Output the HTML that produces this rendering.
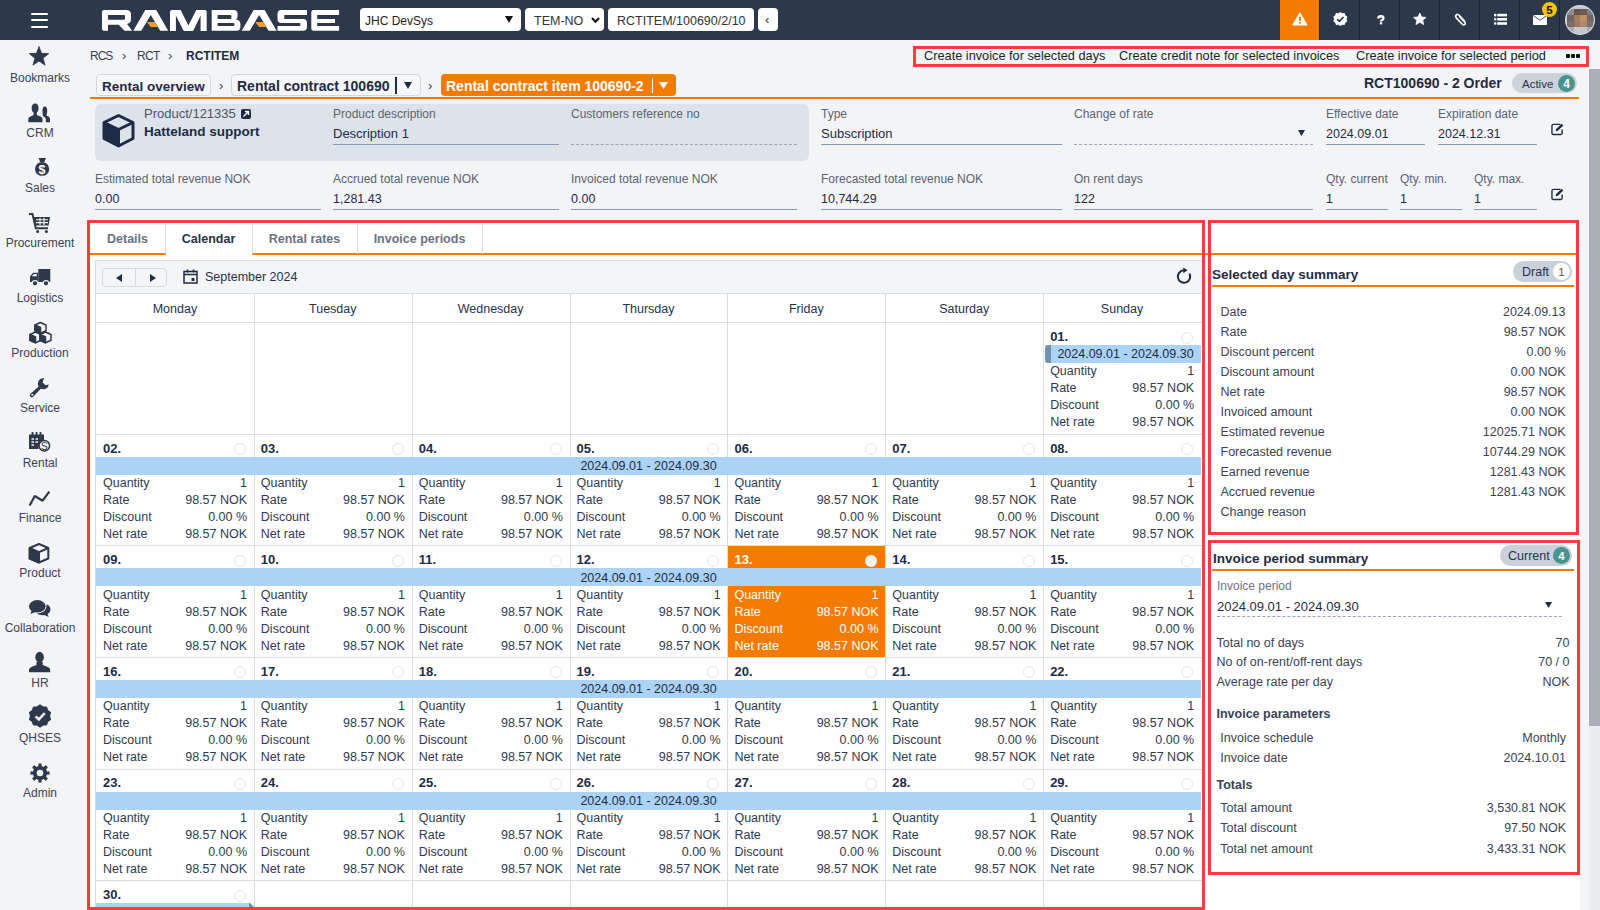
<!DOCTYPE html><html><head><meta charset="utf-8"><style>
*{box-sizing:border-box;margin:0;padding:0}
html,body{width:1600px;height:910px;overflow:hidden;background:#f3f4f6;font-family:"Liberation Sans",sans-serif;color:#27324a}
.b{position:absolute}
.t{position:absolute;white-space:pre;line-height:1}
svg{position:absolute;display:block;overflow:visible}
</style></head><body>

<div class="b" style="left:0px;top:0px;width:1600px;height:40px;background:#2e384b"></div>
<div class="b" style="left:31px;top:13px;width:17px;height:2px;background:#fff;border-radius:1px"></div>
<div class="b" style="left:31px;top:19px;width:17px;height:2px;background:#fff;border-radius:1px"></div>
<div class="b" style="left:31px;top:26px;width:17px;height:2px;background:#fff;border-radius:1px"></div>
<svg style="left:0;top:0" width="400" height="40" viewBox="0 0 400 40"><path fill-rule="evenodd" fill="#fff" d="M102,12 Q102,10 104,10 H126 Q131,10 131,14.5 V19.5 Q131,23 127,24 L132.2,30.7 H124.6 L118.7,24.8 H108 V30.7 H104 Q102,30.7 102,28.7 Z M108,15.1 V19.85 H124 Q125,19.85 125,18.85 V16.1 Q125,15.1 124,15.1 Z"/><path fill="#fff" d="M133.3,30.7 L145.3,10 H156.2 L168.2,30.7 H160.2 L150.75,15 L141.3,30.7 Z"/><path fill="#f59a2c" d="M146.8,22 H154.6 L158.5,27 H150.7 Z"/><path fill="#fff" d="M170,31 V12 Q170,10 172,10 H180.6 L188.4,25.4 L196.25,10 H204.7 Q206.7,10 206.7,12 V31 H200.6 V15.4 L193.1,31 H183.75 L175.9,15.4 V31 Z"/><path fill-rule="evenodd" fill="#fff" d="M211.7,10 H233.5 Q237.5,10 237.5,13.5 V16.5 Q237.5,18.6 236,19.6 Q240.4,20.5 240.4,24 V27 Q240.4,30.7 236.5,30.7 H211.7 Z M217.6,15.1 V18.9 H230.5 Q231.5,18.9 231.5,17 Q231.5,15.1 230.5,15.1 Z M217.6,23.1 V26.1 H233.5 Q234.5,26.1 234.5,24.6 Q234.5,23.1 233.5,23.1 Z"/><path fill="#fff" d="M241.7,30.7 L253.7,10 H264.6 L276.6,30.7 H268.6 L259.15,15 L249.7,30.7 Z"/><path fill="#f59a2c" d="M255.2,22 H263 L266.9,27 H259.1 Z"/><path fill="#fff" d="M281,10 H307 V15.1 H284.3 V18.9 H303 Q307,18.9 307,22.9 V26.7 Q307,30.7 303,30.7 H277.5 V26.1 H300.3 V23.1 H281.5 Q277.5,23.1 277.5,19.1 V14 Q277.5,10 281,10 Z"/><path fill="#fff" d="M313.5,10 H339.1 V15.1 H317.2 V18.9 H335 V23.1 H317.2 V26.1 H339.1 V30.7 H313.5 Q311.3,30.7 311.3,28.5 V12.2 Q311.3,10 313.5,10 Z"/></svg>
<div class="b" style="left:360px;top:8px;width:161px;height:23px;background:#fff;border-radius:4px"></div>
<div class="t" style="left:365px;top:15px;font-size:12px;font-weight:normal;color:#222;">JHC DevSys</div>
<svg style="left:505px;top:16px;" width="8" height="7" viewBox="0 0 8 7"><path d="M0 0H8L4 7Z" fill="#111"/></svg>
<div class="b" style="left:525px;top:8px;width:79px;height:23px;background:#fff;border-radius:4px"></div>
<div class="t" style="left:534px;top:15px;font-size:12.5px;font-weight:normal;color:#333;">TEM-NO</div>
<svg style="left:591px;top:17px;" width="9" height="7" viewBox="0 0 9 7"><path d="M1 1L4.5 4.8L8 1" stroke="#111" stroke-width="2" fill="none"/></svg>
<div class="b" style="left:608px;top:8px;width:146px;height:23px;background:#fff;border-radius:4px"></div>
<div class="t" style="left:617px;top:15px;font-size:12.5px;font-weight:normal;color:#333;">RCTITEM/100690/2/10</div>
<div class="b" style="left:758px;top:8px;width:20px;height:23px;background:#fff;border-radius:4px"></div>
<div class="t" style="left:765px;top:13px;font-size:13px;font-weight:normal;color:#333;">‹</div>
<div class="b" style="left:1280px;top:0px;width:39px;height:40px;background:#f37b00"></div>
<div class="b" style="left:1319px;top:0px;width:1px;height:40px;background:#1e2636"></div>
<div class="b" style="left:1359px;top:0px;width:1px;height:40px;background:#1e2636"></div>
<div class="b" style="left:1399px;top:0px;width:1px;height:40px;background:#1e2636"></div>
<div class="b" style="left:1439px;top:0px;width:1px;height:40px;background:#1e2636"></div>
<div class="b" style="left:1479px;top:0px;width:1px;height:40px;background:#1e2636"></div>
<div class="b" style="left:1519px;top:0px;width:1px;height:40px;background:#1e2636"></div>
<div class="b" style="left:1559px;top:0px;width:1px;height:40px;background:#1e2636"></div>
<svg style="left:0;top:0" width="1600" height="40" viewBox="0 0 1600 40"><path d="M1299.9,13 L1306.8,24.8 H1293 Z" fill="#fff" stroke="#fff" stroke-width="1.2" stroke-linejoin="round"/><rect x="1299" y="16.8" width="1.9" height="4" fill="#f37b00"/><rect x="1299" y="21.8" width="1.9" height="1.8" fill="#f37b00"/><path d="M1340.3,12 L1342.3,13.3 L1344.6,13.1 L1345.4,15.3 L1347.3,16.7 L1346.6,19 L1347.3,21.3 L1345.4,22.7 L1344.6,24.9 L1342.3,24.7 L1340.3,26 L1338.3,24.7 L1336,24.9 L1335.2,22.7 L1333.3,21.3 L1334,19 L1333.3,16.7 L1335.2,15.3 L1336,13.1 L1338.3,13.3 Z" fill="#fff"/><path d="M1337.2,19.2 L1339.4,21.3 L1343.5,17" stroke="#2e384b" stroke-width="1.7" fill="none"/><path d="M1419.8,13 L1421.6,17 L1426,17.4 L1422.7,20.3 L1423.7,24.6 L1419.8,22.3 L1415.9,24.6 L1416.9,20.3 L1413.6,17.4 L1418,17 Z" fill="#fff" stroke="#fff" stroke-width="0.8" stroke-linejoin="round"/><path d="M1464.3,20.8 L1459.5,15.6 Q1457.6,13.6 1456.2,15 Q1454.8,16.4 1456.7,18.4 L1462.3,24.2 Q1463.6,25.5 1464.8,24.4 Q1466,23.3 1464.6,21.9 L1459.8,16.9" stroke="#fff" stroke-width="1.6" fill="none" stroke-linecap="round"/><rect x="1494" y="13.8" width="2.4" height="2.6" rx="1" fill="#fff"/><rect x="1497.2" y="13.8" width="9.8" height="2.6" fill="#fff"/><rect x="1494" y="18" width="2.4" height="2.6" rx="1" fill="#fff"/><rect x="1497.2" y="18" width="9.8" height="2.6" fill="#fff"/><rect x="1494" y="22.2" width="2.4" height="2.6" rx="1" fill="#fff"/><rect x="1497.2" y="22.2" width="9.8" height="2.6" fill="#fff"/><rect x="1533" y="15" width="14" height="10" rx="0.8" fill="#fff"/><path d="M1533.3,15.5 L1540,20.3 L1546.7,15.5" stroke="#2e384b" stroke-width="0.9" fill="none"/><circle cx="1549.5" cy="9.5" r="7.5" fill="#f6c311"/></svg>
<div class="t" style="left:1249.5px;width:600px;top:5px;font-size:11.5px;font-weight:bold;color:#111;text-align:center;">5</div>
<svg style="left:0;top:0" width="1600" height="40" viewBox="0 0 1600 40"><path d="M1378.4,18.4 Q1378.4,16.3 1380.9,16.3 Q1383.4,16.3 1383.4,18.2 Q1383.4,19.4 1382.1,20 Q1381,20.5 1381,21.4" stroke="#fff" stroke-width="2.4" fill="none"/><rect x="1379.8" y="22.2" width="2.4" height="2.2" fill="#fff"/></svg>
<div class="b" style="left:1565px;top:5px;width:30px;height:30px;border-radius:50%;overflow:hidden;background:#c7c9ce"><div style="position:absolute;left:2px;top:3.8px;width:26.6px;height:24.4px;display:grid;grid-template-columns:repeat(4,1fr);grid-template-rows:repeat(4,1fr)"><div style="background:#8e8e92"></div><div style="background:#6a5349"></div><div style="background:#6d5a52"></div><div style="background:#7e7d80"></div><div style="background:#6e6763"></div><div style="background:#a67b5e"></div><div style="background:#c38e66"></div><div style="background:#6f6865"></div><div style="background:#7a6f69"></div><div style="background:#9a7863"></div><div style="background:#b0876a"></div><div style="background:#7b736e"></div><div style="background:#a9abb1"></div><div style="background:#c7c9cf"></div><div style="background:#c5c7cc"></div><div style="background:#a9aaae"></div></div><div style="position:absolute;inset:0;border-radius:50%;border:1.6px solid #d5d8de"></div></div>
<div class="t" style="left:-260px;width:600px;top:72px;font-size:12px;font-weight:normal;color:#3a4354;text-align:center;">Bookmarks</div>
<svg style="left:29.3px;top:46px" width="22" height="22" viewBox="0 0 22 22"><path d="M10.00,0.50 L12.53,7.32 L19.80,7.62 L14.09,12.13 L16.05,19.13 L10.00,15.10 L3.95,19.13 L5.91,12.13 L0.20,7.62 L7.47,7.32 Z" fill="#2e384b" stroke="#2e384b" stroke-width="0.8" stroke-linejoin="round"/></svg>
<div class="t" style="left:-260px;width:600px;top:127px;font-size:12px;font-weight:normal;color:#3a4354;text-align:center;">CRM</div>
<svg style="left:28.8px;top:103px" width="22" height="22" viewBox="0 0 22 22"><ellipse cx="6.1" cy="5.2" rx="3.4" ry="4.6" fill="#2e384b"/><path d="M-0.7,19.2 V16 Q-0.7,14 2.5,13 L4.6,12 V9 H7.8 V12 L10,13 Q13.5,14 13.5,16 V19.2 Z" fill="#2e384b"/><ellipse cx="15.8" cy="8" rx="2.4" ry="4.4" fill="#2e384b"/><path d="M16.8,19.2 V16.3 Q16.8,14.6 14.6,13.5 L13.8,13 V11 H17.6 V12.8 Q21,13.8 21,16 V19.2 Z" fill="#2e384b"/></svg>
<div class="t" style="left:-260px;width:600px;top:182px;font-size:12px;font-weight:normal;color:#3a4354;text-align:center;">Sales</div>
<svg style="left:32.4px;top:158px" width="22" height="22" viewBox="0 0 22 22"><path d="M6.5,0 H14 L12.3,4 H8.2 Z" fill="#2e384b"/><circle cx="10.1" cy="11" r="7.1" fill="#2e384b"/><text x="10.1" y="15.6" text-anchor="middle" font-family="Liberation Sans" font-weight="bold" font-size="12.5" fill="#fff">$</text></svg>
<div class="t" style="left:-260px;width:600px;top:237px;font-size:12px;font-weight:normal;color:#3a4354;text-align:center;">Procurement</div>
<svg style="left:29px;top:212.9px" width="22" height="22" viewBox="0 0 22 22"><path d="M0,1 H3.5 L6.8,15.3 H19" stroke="#2e384b" stroke-width="2" fill="none"/><path d="M4.6,4 H21 L19.6,12.6 H6.6 Z" fill="#2e384b"/><path d="M7,6.8 H19 M7,9.6 H19 M11,4.8 V12 M15,4.8 V12" stroke="#f3f4f6" stroke-width="1.1"/><circle cx="8.6" cy="18.5" r="1.5" fill="#2e384b"/><circle cx="17.4" cy="18.5" r="1.5" fill="#2e384b"/></svg>
<div class="t" style="left:-260px;width:600px;top:292px;font-size:12px;font-weight:normal;color:#3a4354;text-align:center;">Logistics</div>
<svg style="left:29.5px;top:269.4px" width="22" height="22" viewBox="0 0 22 22"><rect x="8.3" y="0" width="12" height="13" fill="#2e384b"/><path d="M0,13 V7.5 L3,3.7 H8.3 V13 Z" fill="#2e384b"/><path d="M1.8,7.3 L3.8,5 H6.8 V7.3 Z" fill="#f3f4f6"/><circle cx="5" cy="14.3" r="2.7" fill="#2e384b" stroke="#f3f4f6" stroke-width="1.1"/><circle cx="16" cy="14.3" r="2.7" fill="#2e384b" stroke="#f3f4f6" stroke-width="1.1"/></svg>
<div class="t" style="left:-260px;width:600px;top:347px;font-size:12px;font-weight:normal;color:#3a4354;text-align:center;">Production</div>
<svg style="left:29.5px;top:321.5px" width="22" height="22" viewBox="0 0 22 22"><g stroke="#2e384b" stroke-width="1.5" stroke-linejoin="round"><path d="M10.5,0.5 L16,3 V8.8 L10.5,11.3 L5,8.8 V3 Z" fill="#f3f4f6"/><path d="M5,3 L10.5,5.5 V11.3 L5,8.8 Z" fill="#2e384b"/><path d="M5.5,10 L11,12.5 V18.3 L5.5,20.8 L0,18.3 V12.5 Z" fill="#f3f4f6"/><path d="M0,12.5 L5.5,15 V20.8 L0,18.3 Z" fill="#2e384b"/><path d="M15.5,10 L21,12.5 V18.3 L15.5,20.8 L10,18.3 V12.5 Z" fill="#f3f4f6"/><path d="M10,12.5 L15.5,15 V20.8 L10,18.3 Z" fill="#2e384b"/></g></svg>
<div class="t" style="left:-260px;width:600px;top:402px;font-size:12px;font-weight:normal;color:#3a4354;text-align:center;">Service</div>
<svg style="left:29.4px;top:378px" width="22" height="22" viewBox="0 0 22 22"><path d="M15.2,0.3 A5.5,5.5 0 1 0 19.8,6.5 L16.6,7.2 L13.6,4.6 L14.5,1.5 Z" fill="#2e384b"/><path d="M12.5,6 L1.5,15.8 Q0,17.3 1.4,18.8 Q2.9,20.2 4.4,18.6 L14.4,8 Z" fill="#2e384b"/><circle cx="3.3" cy="16.8" r="1" fill="#f3f4f6"/></svg>
<div class="t" style="left:-260px;width:600px;top:457px;font-size:12px;font-weight:normal;color:#3a4354;text-align:center;">Rental</div>
<svg style="left:29.4px;top:432.4px" width="22" height="22" viewBox="0 0 22 22"><path d="M0,2.5 H15 V10 A6,6 0 0 0 9.5,16 V17 H0 Z" fill="#2e384b"/><path d="M3.5,0 V4 M7.5,0 V4 M11.5,0 V4" stroke="#2e384b" stroke-width="1.8"/><path d="M2.5,7 H5 M6.5,7 H9 M2.5,10 H5 M6.5,10 H9 M2.5,13 H5" stroke="#f3f4f6" stroke-width="1.6"/><circle cx="15.3" cy="13.7" r="5.3" fill="#f3f4f6" stroke="#2e384b" stroke-width="1.5"/><text x="15.3" y="17.6" text-anchor="middle" font-family="Liberation Sans" font-size="10" fill="#2e384b">S</text></svg>
<div class="t" style="left:-260px;width:600px;top:512px;font-size:12px;font-weight:normal;color:#3a4354;text-align:center;">Finance</div>
<svg style="left:29px;top:490.6px" width="22" height="22" viewBox="0 0 22 22"><path d="M0.6,14.5 L5.8,5 L13.6,9.7 L20.3,0.6" stroke="#2e384b" stroke-width="2.2" fill="none" stroke-linejoin="bevel"/></svg>
<div class="t" style="left:-260px;width:600px;top:567px;font-size:12px;font-weight:normal;color:#3a4354;text-align:center;">Product</div>
<svg style="left:28.9px;top:542.5px" width="22" height="22" viewBox="0 0 22 22"><g stroke="#2e384b" stroke-width="2" stroke-linejoin="round"><path d="M10,1 L19.3,5 V15.5 L10,19.5 L0.7,15.5 V5 Z" fill="#f3f4f6"/><path d="M0.7,5 L10,9.2 V19.5 L0.7,15.5 Z" fill="#2e384b"/><path d="M10,9.2 L19.3,5"/></g></svg>
<div class="t" style="left:-260px;width:600px;top:622px;font-size:12px;font-weight:normal;color:#3a4354;text-align:center;">Collaboration</div>
<svg style="left:28.7px;top:600px" width="22" height="22" viewBox="0 0 22 22"><ellipse cx="8.3" cy="6.3" rx="8.3" ry="6.2" fill="#2e384b"/><path d="M2.5,10.5 L1.5,14 L6.5,12 Z" fill="#2e384b"/><path d="M17.6,4.2 Q21.5,6.2 21.5,9.5 Q21.5,12.5 18.5,14.2 L19.8,17 L15,15 Q13.5,15.3 11.8,15 Q9.5,14.6 8,13.5 Q15,13 17,8.5 Q17.8,6.3 17.6,4.2 Z" fill="#2e384b"/></svg>
<div class="t" style="left:-260px;width:600px;top:677px;font-size:12px;font-weight:normal;color:#3a4354;text-align:center;">HR</div>
<svg style="left:28.9px;top:652px" width="22" height="22" viewBox="0 0 22 22"><ellipse cx="10.6" cy="5.2" rx="4.3" ry="5.4" fill="#2e384b"/><path d="M0,20.3 V18.2 Q0,15.8 3.5,14.6 L7.5,13 V10 H13.7 V13 L17.7,14.6 Q21.2,15.8 21.2,18.2 V20.3 Z" fill="#2e384b"/></svg>
<div class="t" style="left:-260px;width:600px;top:732px;font-size:12px;font-weight:normal;color:#3a4354;text-align:center;">QHSES</div>
<svg style="left:29.5px;top:706.3px" width="22" height="22" viewBox="0 0 22 22"><path d="M10.00,-0.80 L12.87,1.16 L16.35,1.26 L17.52,4.53 L20.27,6.66 L19.30,10.00 L20.27,13.34 L17.52,15.47 L16.35,18.74 L12.87,18.84 L10.00,20.80 L7.13,18.84 L3.65,18.74 L2.48,15.47 L-0.27,13.34 L0.70,10.00 L-0.27,6.66 L2.48,4.53 L3.65,1.26 L7.13,1.16 Z" fill="#2e384b" stroke="#2e384b" stroke-width="1.5" stroke-linejoin="round"/><path d="M5.6,10.4 L8.8,13.4 L14.8,7.2" stroke="#f3f4f6" stroke-width="2.6" fill="none"/></svg>
<div class="t" style="left:-260px;width:600px;top:787px;font-size:12px;font-weight:normal;color:#3a4354;text-align:center;">Admin</div>
<svg style="left:29.9px;top:762.6px" width="22" height="22" viewBox="0 0 22 22"><path fill-rule="evenodd" d="M17.03,8.43 L19.56,8.36 L19.56,11.64 L17.03,11.57 L16.08,13.86 L17.92,15.60 L15.60,17.92 L13.86,16.08 L11.57,17.03 L11.64,19.56 L8.36,19.56 L8.43,17.03 L6.14,16.08 L4.40,17.92 L2.08,15.60 L3.92,13.86 L2.97,11.57 L0.44,11.64 L0.44,8.36 L2.97,8.43 L3.92,6.14 L2.08,4.40 L4.40,2.08 L6.14,3.92 L8.43,2.97 L8.36,0.44 L11.64,0.44 L11.57,2.97 L13.86,3.92 L15.60,2.08 L17.92,4.40 L16.08,6.14 Z M13.3,10 A3.3,3.3 0 1 0 6.7,10 A3.3,3.3 0 1 0 13.3,10 Z" fill="#2e384b"/></svg>
<div class="t" style="left:90px;top:50px;font-size:12px;font-weight:normal;color:#374151;letter-spacing:-1px">RCS</div>
<div class="t" style="left:122px;top:49px;font-size:13px;font-weight:normal;color:#374151;">›</div>
<div class="t" style="left:137px;top:50px;font-size:12px;font-weight:normal;color:#374151;letter-spacing:-0.7px">RCT</div>
<div class="t" style="left:168px;top:49px;font-size:13px;font-weight:normal;color:#374151;">›</div>
<div class="t" style="left:186px;top:50px;font-size:12px;font-weight:bold;color:#1f2b45;">RCTITEM</div>
<div class="b" style="left:913px;top:46px;width:676px;height:21px;border:3px solid #fc3b40"></div>
<div class="t" style="left:924px;top:50px;font-size:12.75px;font-weight:normal;color:#222;">Create invoice for selected days</div>
<div class="t" style="left:1119px;top:50px;font-size:12.75px;font-weight:normal;color:#222;">Create credit note for selected invoices</div>
<div class="t" style="left:1356px;top:50px;font-size:12.75px;font-weight:normal;color:#222;">Create invoice for selected period</div>
<div class="b" style="left:1566px;top:54px;width:4px;height:4px;background:#111;border-radius:1px"></div>
<div class="b" style="left:1571px;top:54px;width:4px;height:4px;background:#111;border-radius:1px"></div>
<div class="b" style="left:1576px;top:54px;width:4px;height:4px;background:#111;border-radius:1px"></div>
<div class="b" style="left:96px;top:74px;width:115px;height:22px;border:1px solid #d3d7dd;border-radius:4px;background:#f5f6f8"></div>
<div class="t" style="left:102px;top:80px;font-size:13.5px;font-weight:bold;color:#1f2b45;">Rental overview</div>
<div class="t" style="left:219px;top:79px;font-size:13px;font-weight:normal;color:#374151;">›</div>
<div class="b" style="left:231px;top:74px;width:190px;height:22px;border:1px solid #d3d7dd;border-radius:4px;background:#f5f6f8"></div>
<div class="t" style="left:237px;top:79px;font-size:14px;font-weight:bold;color:#1f2b45;">Rental contract 100690</div>
<div class="b" style="left:395px;top:77px;width:2px;height:17px;background:#1f2b45"></div>
<svg style="left:404px;top:82px;" width="8" height="7" viewBox="0 0 8 7"><path d="M0 0H8L4 7Z" fill="#1f2b45"/></svg>
<div class="t" style="left:428px;top:79px;font-size:13px;font-weight:normal;color:#374151;">›</div>
<div class="b" style="left:441px;top:74px;width:235px;height:22px;background:#f37b00;border-radius:4px"></div>
<div class="t" style="left:446px;top:79px;font-size:14px;font-weight:bold;color:#fff;">Rental contract item 100690-2</div>
<div class="b" style="left:652px;top:78px;width:1px;height:15px;background:#fff"></div>
<svg style="left:659px;top:82px;" width="9" height="7" viewBox="0 0 9 7"><path d="M0 0H9L4.5 7Z" fill="#fff"/></svg>
<div class="t" style="left:1364px;top:76px;font-size:14px;font-weight:bold;color:#1f2b45;">RCT100690 - 2 Order</div>
<div class="b" style="left:1512px;top:73px;width:65px;height:20px;background:#cdd3db;border-radius:10px"></div>
<div class="t" style="left:1522px;top:79px;font-size:11.5px;font-weight:normal;color:#27324a;">Active</div>
<div class="b" style="left:1558px;top:75px;width:17px;height:17px;background:#4a9490;border-radius:50%"></div>
<div class="t" style="left:1266.5px;width:600px;top:78px;font-size:12px;font-weight:bold;color:#fff;text-align:center;">4</div>
<div class="b" style="left:90px;top:97px;width:1489px;height:2px;background:#f37b00"></div>
<div class="b" style="left:1589px;top:726px;width:11px;height:184px;background:#ebecef"></div>
<div class="b" style="left:1589px;top:69px;width:11px;height:657px;background:#a9aeb8"></div>
<div class="b" style="left:95px;top:104px;width:714px;height:57px;background:#dde3eb;border-radius:6px"></div>
<svg style="left:102px;top:114px;" width="33" height="34" viewBox="0 0 33 34"><path d="M16.5 1.5L31 8.5V24.5L16.5 32L2 24.5V8.5Z" fill="none" stroke="#1f2b45" stroke-width="3" stroke-linejoin="round"/><path d="M2 8.5L16.5 15.5L31 8.5" fill="none" stroke="#1f2b45" stroke-width="3" stroke-linejoin="round"/><path d="M16.5 15.5V32" stroke="#1f2b45" stroke-width="3"/><path d="M2 8.5L16.5 15.5V32L2 24.5Z" fill="#1f2b45"/></svg>
<div class="t" style="left:144px;top:107px;font-size:13px;font-weight:normal;color:#4b5563;">Product/121335</div>
<div class="b" style="left:241px;top:109px;width:10px;height:10px;background:#1f2b45;border-radius:2px"></div>
<svg style="left:243px;top:111px;" width="6" height="6" viewBox="0 0 6 6"><path d="M0.5 5.5L5.5 0.5M2 0.5H5.5V4" stroke="#fff" stroke-width="1.4" fill="none"/></svg>
<div class="t" style="left:144px;top:125px;font-size:13.5px;font-weight:bold;color:#1f2b45;">Hatteland support</div>
<div class="t" style="left:333px;top:108px;font-size:12px;font-weight:normal;color:#5b6372;">Product description</div>
<div class="t" style="left:333px;top:127px;font-size:13px;font-weight:normal;color:#1f2b45;">Description 1</div>
<div class="b" style="left:333px;top:144px;width:226px;height:1px;background:#8a9ab0"></div>
<div class="t" style="left:571px;top:108px;font-size:12px;font-weight:normal;color:#5b6372;">Customers reference no</div>
<div class="b" style="left:571px;top:144px;width:226px;height:1px;border-top:1px dashed #9aa7b8"></div>
<div class="t" style="left:821px;top:108px;font-size:12px;font-weight:normal;color:#5b6372;">Type</div>
<div class="t" style="left:821px;top:127px;font-size:13px;font-weight:normal;color:#1f2b45;">Subscription</div>
<div class="b" style="left:821px;top:144px;width:241px;height:1px;background:#8a9ab0"></div>
<div class="t" style="left:1074px;top:108px;font-size:12px;font-weight:normal;color:#5b6372;">Change of rate</div>
<div class="b" style="left:1074px;top:144px;width:239px;height:1px;border-top:1px dashed #9aa7b8"></div>
<svg style="left:1298px;top:130px;" width="7" height="6" viewBox="0 0 7 6"><path d="M0 0H7L3.5 6Z" fill="#1f2b45"/></svg>
<div class="t" style="left:1326px;top:108px;font-size:12px;font-weight:normal;color:#5b6372;">Effective date</div>
<div class="t" style="left:1326px;top:128px;font-size:12.5px;font-weight:normal;color:#1f2b45;">2024.09.01</div>
<div class="b" style="left:1326px;top:144px;width:99px;height:1px;background:#8a9ab0"></div>
<div class="t" style="left:1438px;top:108px;font-size:12px;font-weight:normal;color:#5b6372;">Expiration date</div>
<div class="t" style="left:1438px;top:128px;font-size:12.5px;font-weight:normal;color:#1f2b45;">2024.12.31</div>
<div class="b" style="left:1438px;top:144px;width:99px;height:1px;background:#8a9ab0"></div>
<div class="t" style="left:95px;top:173px;font-size:12px;font-weight:normal;color:#5b6372;">Estimated total revenue NOK</div>
<div class="t" style="left:95px;top:193px;font-size:12.5px;font-weight:normal;color:#1f2b45;">0.00</div>
<div class="b" style="left:95px;top:209px;width:226px;height:1px;background:#8a9ab0"></div>
<div class="t" style="left:333px;top:173px;font-size:12px;font-weight:normal;color:#5b6372;">Accrued total revenue NOK</div>
<div class="t" style="left:333px;top:193px;font-size:12.5px;font-weight:normal;color:#1f2b45;">1,281.43</div>
<div class="b" style="left:333px;top:209px;width:226px;height:1px;background:#8a9ab0"></div>
<div class="t" style="left:571px;top:173px;font-size:12px;font-weight:normal;color:#5b6372;">Invoiced total revenue NOK</div>
<div class="t" style="left:571px;top:193px;font-size:12.5px;font-weight:normal;color:#1f2b45;">0.00</div>
<div class="b" style="left:571px;top:209px;width:226px;height:1px;background:#8a9ab0"></div>
<div class="t" style="left:821px;top:173px;font-size:12px;font-weight:normal;color:#5b6372;">Forecasted total revenue NOK</div>
<div class="t" style="left:821px;top:193px;font-size:12.5px;font-weight:normal;color:#1f2b45;">10,744.29</div>
<div class="b" style="left:821px;top:209px;width:241px;height:1px;background:#8a9ab0"></div>
<div class="t" style="left:1074px;top:173px;font-size:12px;font-weight:normal;color:#5b6372;">On rent days</div>
<div class="t" style="left:1074px;top:193px;font-size:12.5px;font-weight:normal;color:#1f2b45;">122</div>
<div class="b" style="left:1074px;top:209px;width:239px;height:1px;background:#8a9ab0"></div>
<div class="t" style="left:1326px;top:173px;font-size:12px;font-weight:normal;color:#5b6372;">Qty. current</div>
<div class="t" style="left:1326px;top:193px;font-size:12.5px;font-weight:normal;color:#1f2b45;">1</div>
<div class="b" style="left:1326px;top:209px;width:62px;height:1px;background:#8a9ab0"></div>
<div class="t" style="left:1400px;top:173px;font-size:12px;font-weight:normal;color:#5b6372;">Qty. min.</div>
<div class="t" style="left:1400px;top:193px;font-size:12.5px;font-weight:normal;color:#1f2b45;">1</div>
<div class="b" style="left:1400px;top:209px;width:62px;height:1px;background:#8a9ab0"></div>
<div class="t" style="left:1474px;top:173px;font-size:12px;font-weight:normal;color:#5b6372;">Qty. max.</div>
<div class="t" style="left:1474px;top:193px;font-size:12.5px;font-weight:normal;color:#1f2b45;">1</div>
<div class="b" style="left:1474px;top:209px;width:63px;height:1px;background:#8a9ab0"></div>
<svg style="left:1551px;top:123px;" width="13" height="12" viewBox="0 0 14 13"><path d="M10 1.5H2.5A1.5 1.5 0 0 0 1 3V11A1.5 1.5 0 0 0 2.5 12.5H10.5A1.5 1.5 0 0 0 12 11V7" fill="none" stroke="#1f2b45" stroke-width="1.5"/><path d="M5 9L5.5 6.5L11.5 0.8L13.3 2.6L7.4 8.4Z" fill="#1f2b45"/></svg>
<svg style="left:1551px;top:188px;" width="13" height="12" viewBox="0 0 14 13"><path d="M10 1.5H2.5A1.5 1.5 0 0 0 1 3V11A1.5 1.5 0 0 0 2.5 12.5H10.5A1.5 1.5 0 0 0 12 11V7" fill="none" stroke="#1f2b45" stroke-width="1.5"/><path d="M5 9L5.5 6.5L11.5 0.8L13.3 2.6L7.4 8.4Z" fill="#1f2b45"/></svg>
<div class="b" style="left:90px;top:223px;width:1112px;height:687px;background:#fff"></div>
<div class="b" style="left:90px;top:253px;width:1489px;height:2px;background:#f37b00"></div>
<div class="t" style="left:-172.5px;width:600px;top:233px;font-size:12.5px;font-weight:bold;color:#6b7280;text-align:center;">Details</div>
<div class="t" style="left:-91.5px;width:600px;top:233px;font-size:12.5px;font-weight:bold;color:#27324a;text-align:center;">Calendar</div>
<div class="b" style="left:166px;top:253px;width:86px;height:2px;background:#fff"></div>
<div class="t" style="left:4.5px;width:600px;top:233px;font-size:12.5px;font-weight:bold;color:#6b7280;text-align:center;">Rental rates</div>
<div class="t" style="left:119.5px;width:600px;top:233px;font-size:12.5px;font-weight:bold;color:#6b7280;text-align:center;">Invoice periods</div>
<div class="b" style="left:165px;top:224px;width:1px;height:30px;background:#d8dce1"></div>
<div class="b" style="left:252px;top:224px;width:1px;height:30px;background:#d8dce1"></div>
<div class="b" style="left:357px;top:224px;width:1px;height:30px;background:#d8dce1"></div>
<div class="b" style="left:482px;top:224px;width:1px;height:30px;background:#d8dce1"></div>
<div class="b" style="left:95px;top:260px;width:1107px;height:33px;background:#f4f5f6;border-top:1px solid #dcdfe3;border-left:1px solid #dcdfe3"></div>
<div class="b" style="left:102px;top:268px;width:65px;height:19px;border:1px solid #d6d9de;border-radius:4px;background:#f4f5f6"></div>
<div class="b" style="left:135px;top:268px;width:1px;height:19px;background:#d6d9de"></div>
<svg style="left:116px;top:273.5px;" width="6" height="8" viewBox="0 0 6 8"><path d="M6 0V8L0 4Z" fill="#1f2b45"/></svg>
<svg style="left:150px;top:273.5px;" width="6" height="8" viewBox="0 0 6 8"><path d="M0 0V8L6 4Z" fill="#1f2b45"/></svg>
<svg style="left:183px;top:269px;" width="15" height="15" viewBox="0 0 15 15"><rect x="1" y="2.5" width="13" height="11.5" fill="none" stroke="#1f2b45" stroke-width="1.5"/><path d="M1 5.5H14" stroke="#1f2b45" stroke-width="1.5"/><path d="M4.5 0.5V3.5M10.5 0.5V3.5" stroke="#1f2b45" stroke-width="1.6"/><rect x="8.5" y="9" width="3" height="3" fill="#1f2b45"/></svg>
<div class="t" style="left:205px;top:271px;font-size:12.5px;font-weight:normal;color:#27324a;">September 2024</div>
<svg style="left:1175px;top:268px;" width="17" height="17" viewBox="0 0 17 17"><path d="M9,2.3 A6.2,6.2 0 1 0 14.4,5.4" fill="none" stroke="#1f2b45" stroke-width="2"/><path d="M8.3,-0.6 L12.6,2.3 L8.3,5.2 Z" fill="#1f2b45"/></svg>
<div class="b" style="left:95px;top:293px;width:1px;height:617px;background:#d9dcdf"></div>
<div class="b" style="left:95px;top:322px;width:1107px;height:1px;background:#d9dcdf"></div>
<div class="b" style="left:95px;top:293px;width:1107px;height:1px;background:#dcdfe3"></div>
<div class="t" style="left:-125.07150000000001px;width:600px;top:303px;font-size:12.5px;font-weight:normal;color:#27324a;text-align:center;">Monday</div>
<div class="t" style="left:32.78550000000001px;width:600px;top:303px;font-size:12.5px;font-weight:normal;color:#27324a;text-align:center;">Tuesday</div>
<div class="t" style="left:190.64250000000004px;width:600px;top:303px;font-size:12.5px;font-weight:normal;color:#27324a;text-align:center;">Wednesday</div>
<div class="t" style="left:348.4995px;width:600px;top:303px;font-size:12.5px;font-weight:normal;color:#27324a;text-align:center;">Thursday</div>
<div class="t" style="left:506.3565px;width:600px;top:303px;font-size:12.5px;font-weight:normal;color:#27324a;text-align:center;">Friday</div>
<div class="t" style="left:664.2135000000001px;width:600px;top:303px;font-size:12.5px;font-weight:normal;color:#27324a;text-align:center;">Saturday</div>
<div class="t" style="left:822.0709999999999px;width:600px;top:303px;font-size:12.5px;font-weight:normal;color:#27324a;text-align:center;">Sunday</div>
<div class="b" style="left:254px;top:293px;width:1px;height:617px;background:#d9dcdf"></div>
<div class="b" style="left:412px;top:293px;width:1px;height:617px;background:#d9dcdf"></div>
<div class="b" style="left:570px;top:293px;width:1px;height:617px;background:#d9dcdf"></div>
<div class="b" style="left:727px;top:293px;width:1px;height:617px;background:#d9dcdf"></div>
<div class="b" style="left:885px;top:293px;width:1px;height:617px;background:#d9dcdf"></div>
<div class="b" style="left:1043px;top:293px;width:1px;height:617px;background:#d9dcdf"></div>
<div class="b" style="left:95px;top:434px;width:1107px;height:1px;background:#d9dcdf"></div>
<div class="b" style="left:95px;top:545px;width:1107px;height:1px;background:#d9dcdf"></div>
<div class="b" style="left:95px;top:657px;width:1107px;height:1px;background:#d9dcdf"></div>
<div class="b" style="left:95px;top:769px;width:1107px;height:1px;background:#d9dcdf"></div>
<div class="b" style="left:95px;top:880px;width:1107px;height:1px;background:#d9dcdf"></div>
<div class="t" style="left:1050.142px;top:330px;font-size:13px;font-weight:bold;color:#1f2b45;">01.</div>
<div class="b" style="left:1181px;top:331.5px;width:12px;height:12px;border:1px solid #e3e5e8;border-radius:50%"></div>
<div class="t" style="left:1050.142px;top:365px;font-size:12.5px;font-weight:normal;color:#2f3a4f;">Quantity</div>
<div class="t" style="right:405.79999999999995px;top:365px;font-size:12.5px;font-weight:normal;color:#2f3a4f;text-align:right;">1</div>
<div class="t" style="left:1050.142px;top:382px;font-size:12.5px;font-weight:normal;color:#2f3a4f;">Rate</div>
<div class="t" style="right:405.79999999999995px;top:382px;font-size:12.5px;font-weight:normal;color:#2f3a4f;text-align:right;">98.57 NOK</div>
<div class="t" style="left:1050.142px;top:399px;font-size:12.5px;font-weight:normal;color:#2f3a4f;">Discount</div>
<div class="t" style="right:405.79999999999995px;top:399px;font-size:12.5px;font-weight:normal;color:#2f3a4f;text-align:right;">0.00 %</div>
<div class="t" style="left:1050.142px;top:416px;font-size:12.5px;font-weight:normal;color:#2f3a4f;">Net rate</div>
<div class="t" style="right:405.79999999999995px;top:416px;font-size:12.5px;font-weight:normal;color:#2f3a4f;text-align:right;">98.57 NOK</div>
<div class="b" style="left:1045px;top:345px;width:156px;height:18px;background:#acd3f4"></div>
<div class="b" style="left:1045px;top:345px;width:6px;height:18px;background:#7391ae;border-radius:4px 0 0 4px"></div>
<div class="t" style="left:825.5px;width:600px;top:348px;font-size:12.5px;font-weight:normal;color:#1f2b45;text-align:center;">2024.09.01 - 2024.09.30</div>
<div class="t" style="left:103.0px;top:442px;font-size:13px;font-weight:bold;color:#1f2b45;">02.</div>
<div class="b" style="left:233.857px;top:443.09999999999997px;width:12px;height:12px;border:1px solid #e3e5e8;border-radius:50%"></div>
<div class="t" style="left:103.0px;top:477px;font-size:12.5px;font-weight:normal;color:#2f3a4f;">Quantity</div>
<div class="t" style="right:1352.943px;top:477px;font-size:12.5px;font-weight:normal;color:#2f3a4f;text-align:right;">1</div>
<div class="t" style="left:103.0px;top:494px;font-size:12.5px;font-weight:normal;color:#2f3a4f;">Rate</div>
<div class="t" style="right:1352.943px;top:494px;font-size:12.5px;font-weight:normal;color:#2f3a4f;text-align:right;">98.57 NOK</div>
<div class="t" style="left:103.0px;top:511px;font-size:12.5px;font-weight:normal;color:#2f3a4f;">Discount</div>
<div class="t" style="right:1352.943px;top:511px;font-size:12.5px;font-weight:normal;color:#2f3a4f;text-align:right;">0.00 %</div>
<div class="t" style="left:103.0px;top:528px;font-size:12.5px;font-weight:normal;color:#2f3a4f;">Net rate</div>
<div class="t" style="right:1352.943px;top:528px;font-size:12.5px;font-weight:normal;color:#2f3a4f;text-align:right;">98.57 NOK</div>
<div class="t" style="left:260.85699999999997px;top:442px;font-size:13px;font-weight:bold;color:#1f2b45;">03.</div>
<div class="b" style="left:391.714px;top:443.09999999999997px;width:12px;height:12px;border:1px solid #e3e5e8;border-radius:50%"></div>
<div class="t" style="left:260.85699999999997px;top:477px;font-size:12.5px;font-weight:normal;color:#2f3a4f;">Quantity</div>
<div class="t" style="right:1195.086px;top:477px;font-size:12.5px;font-weight:normal;color:#2f3a4f;text-align:right;">1</div>
<div class="t" style="left:260.85699999999997px;top:494px;font-size:12.5px;font-weight:normal;color:#2f3a4f;">Rate</div>
<div class="t" style="right:1195.086px;top:494px;font-size:12.5px;font-weight:normal;color:#2f3a4f;text-align:right;">98.57 NOK</div>
<div class="t" style="left:260.85699999999997px;top:511px;font-size:12.5px;font-weight:normal;color:#2f3a4f;">Discount</div>
<div class="t" style="right:1195.086px;top:511px;font-size:12.5px;font-weight:normal;color:#2f3a4f;text-align:right;">0.00 %</div>
<div class="t" style="left:260.85699999999997px;top:528px;font-size:12.5px;font-weight:normal;color:#2f3a4f;">Net rate</div>
<div class="t" style="right:1195.086px;top:528px;font-size:12.5px;font-weight:normal;color:#2f3a4f;text-align:right;">98.57 NOK</div>
<div class="t" style="left:418.714px;top:442px;font-size:13px;font-weight:bold;color:#1f2b45;">04.</div>
<div class="b" style="left:549.571px;top:443.09999999999997px;width:12px;height:12px;border:1px solid #e3e5e8;border-radius:50%"></div>
<div class="t" style="left:418.714px;top:477px;font-size:12.5px;font-weight:normal;color:#2f3a4f;">Quantity</div>
<div class="t" style="right:1037.2289999999998px;top:477px;font-size:12.5px;font-weight:normal;color:#2f3a4f;text-align:right;">1</div>
<div class="t" style="left:418.714px;top:494px;font-size:12.5px;font-weight:normal;color:#2f3a4f;">Rate</div>
<div class="t" style="right:1037.2289999999998px;top:494px;font-size:12.5px;font-weight:normal;color:#2f3a4f;text-align:right;">98.57 NOK</div>
<div class="t" style="left:418.714px;top:511px;font-size:12.5px;font-weight:normal;color:#2f3a4f;">Discount</div>
<div class="t" style="right:1037.2289999999998px;top:511px;font-size:12.5px;font-weight:normal;color:#2f3a4f;text-align:right;">0.00 %</div>
<div class="t" style="left:418.714px;top:528px;font-size:12.5px;font-weight:normal;color:#2f3a4f;">Net rate</div>
<div class="t" style="right:1037.2289999999998px;top:528px;font-size:12.5px;font-weight:normal;color:#2f3a4f;text-align:right;">98.57 NOK</div>
<div class="t" style="left:576.571px;top:442px;font-size:13px;font-weight:bold;color:#1f2b45;">05.</div>
<div class="b" style="left:707.428px;top:443.09999999999997px;width:12px;height:12px;border:1px solid #e3e5e8;border-radius:50%"></div>
<div class="t" style="left:576.571px;top:477px;font-size:12.5px;font-weight:normal;color:#2f3a4f;">Quantity</div>
<div class="t" style="right:879.372px;top:477px;font-size:12.5px;font-weight:normal;color:#2f3a4f;text-align:right;">1</div>
<div class="t" style="left:576.571px;top:494px;font-size:12.5px;font-weight:normal;color:#2f3a4f;">Rate</div>
<div class="t" style="right:879.372px;top:494px;font-size:12.5px;font-weight:normal;color:#2f3a4f;text-align:right;">98.57 NOK</div>
<div class="t" style="left:576.571px;top:511px;font-size:12.5px;font-weight:normal;color:#2f3a4f;">Discount</div>
<div class="t" style="right:879.372px;top:511px;font-size:12.5px;font-weight:normal;color:#2f3a4f;text-align:right;">0.00 %</div>
<div class="t" style="left:576.571px;top:528px;font-size:12.5px;font-weight:normal;color:#2f3a4f;">Net rate</div>
<div class="t" style="right:879.372px;top:528px;font-size:12.5px;font-weight:normal;color:#2f3a4f;text-align:right;">98.57 NOK</div>
<div class="t" style="left:734.428px;top:442px;font-size:13px;font-weight:bold;color:#1f2b45;">06.</div>
<div class="b" style="left:865.285px;top:443.09999999999997px;width:12px;height:12px;border:1px solid #e3e5e8;border-radius:50%"></div>
<div class="t" style="left:734.428px;top:477px;font-size:12.5px;font-weight:normal;color:#2f3a4f;">Quantity</div>
<div class="t" style="right:721.515px;top:477px;font-size:12.5px;font-weight:normal;color:#2f3a4f;text-align:right;">1</div>
<div class="t" style="left:734.428px;top:494px;font-size:12.5px;font-weight:normal;color:#2f3a4f;">Rate</div>
<div class="t" style="right:721.515px;top:494px;font-size:12.5px;font-weight:normal;color:#2f3a4f;text-align:right;">98.57 NOK</div>
<div class="t" style="left:734.428px;top:511px;font-size:12.5px;font-weight:normal;color:#2f3a4f;">Discount</div>
<div class="t" style="right:721.515px;top:511px;font-size:12.5px;font-weight:normal;color:#2f3a4f;text-align:right;">0.00 %</div>
<div class="t" style="left:734.428px;top:528px;font-size:12.5px;font-weight:normal;color:#2f3a4f;">Net rate</div>
<div class="t" style="right:721.515px;top:528px;font-size:12.5px;font-weight:normal;color:#2f3a4f;text-align:right;">98.57 NOK</div>
<div class="t" style="left:892.285px;top:442px;font-size:13px;font-weight:bold;color:#1f2b45;">07.</div>
<div class="b" style="left:1023.142px;top:443.09999999999997px;width:12px;height:12px;border:1px solid #e3e5e8;border-radius:50%"></div>
<div class="t" style="left:892.285px;top:477px;font-size:12.5px;font-weight:normal;color:#2f3a4f;">Quantity</div>
<div class="t" style="right:563.6579999999999px;top:477px;font-size:12.5px;font-weight:normal;color:#2f3a4f;text-align:right;">1</div>
<div class="t" style="left:892.285px;top:494px;font-size:12.5px;font-weight:normal;color:#2f3a4f;">Rate</div>
<div class="t" style="right:563.6579999999999px;top:494px;font-size:12.5px;font-weight:normal;color:#2f3a4f;text-align:right;">98.57 NOK</div>
<div class="t" style="left:892.285px;top:511px;font-size:12.5px;font-weight:normal;color:#2f3a4f;">Discount</div>
<div class="t" style="right:563.6579999999999px;top:511px;font-size:12.5px;font-weight:normal;color:#2f3a4f;text-align:right;">0.00 %</div>
<div class="t" style="left:892.285px;top:528px;font-size:12.5px;font-weight:normal;color:#2f3a4f;">Net rate</div>
<div class="t" style="right:563.6579999999999px;top:528px;font-size:12.5px;font-weight:normal;color:#2f3a4f;text-align:right;">98.57 NOK</div>
<div class="t" style="left:1050.142px;top:442px;font-size:13px;font-weight:bold;color:#1f2b45;">08.</div>
<div class="b" style="left:1181px;top:443.09999999999997px;width:12px;height:12px;border:1px solid #e3e5e8;border-radius:50%"></div>
<div class="t" style="left:1050.142px;top:477px;font-size:12.5px;font-weight:normal;color:#2f3a4f;">Quantity</div>
<div class="t" style="right:405.79999999999995px;top:477px;font-size:12.5px;font-weight:normal;color:#2f3a4f;text-align:right;">1</div>
<div class="t" style="left:1050.142px;top:494px;font-size:12.5px;font-weight:normal;color:#2f3a4f;">Rate</div>
<div class="t" style="right:405.79999999999995px;top:494px;font-size:12.5px;font-weight:normal;color:#2f3a4f;text-align:right;">98.57 NOK</div>
<div class="t" style="left:1050.142px;top:511px;font-size:12.5px;font-weight:normal;color:#2f3a4f;">Discount</div>
<div class="t" style="right:405.79999999999995px;top:511px;font-size:12.5px;font-weight:normal;color:#2f3a4f;text-align:right;">0.00 %</div>
<div class="t" style="left:1050.142px;top:528px;font-size:12.5px;font-weight:normal;color:#2f3a4f;">Net rate</div>
<div class="t" style="right:405.79999999999995px;top:528px;font-size:12.5px;font-weight:normal;color:#2f3a4f;text-align:right;">98.57 NOK</div>
<div class="b" style="left:96px;top:457px;width:1105px;height:18px;background:#acd3f4"></div>
<div class="t" style="left:348.5px;width:600px;top:460px;font-size:12.5px;font-weight:normal;color:#1f2b45;text-align:center;">2024.09.01 - 2024.09.30</div>
<div class="t" style="left:103.0px;top:553px;font-size:13px;font-weight:bold;color:#1f2b45;">09.</div>
<div class="b" style="left:233.857px;top:554.7px;width:12px;height:12px;border:1px solid #e3e5e8;border-radius:50%"></div>
<div class="t" style="left:103.0px;top:589px;font-size:12.5px;font-weight:normal;color:#2f3a4f;">Quantity</div>
<div class="t" style="right:1352.943px;top:589px;font-size:12.5px;font-weight:normal;color:#2f3a4f;text-align:right;">1</div>
<div class="t" style="left:103.0px;top:606px;font-size:12.5px;font-weight:normal;color:#2f3a4f;">Rate</div>
<div class="t" style="right:1352.943px;top:606px;font-size:12.5px;font-weight:normal;color:#2f3a4f;text-align:right;">98.57 NOK</div>
<div class="t" style="left:103.0px;top:623px;font-size:12.5px;font-weight:normal;color:#2f3a4f;">Discount</div>
<div class="t" style="right:1352.943px;top:623px;font-size:12.5px;font-weight:normal;color:#2f3a4f;text-align:right;">0.00 %</div>
<div class="t" style="left:103.0px;top:640px;font-size:12.5px;font-weight:normal;color:#2f3a4f;">Net rate</div>
<div class="t" style="right:1352.943px;top:640px;font-size:12.5px;font-weight:normal;color:#2f3a4f;text-align:right;">98.57 NOK</div>
<div class="t" style="left:260.85699999999997px;top:553px;font-size:13px;font-weight:bold;color:#1f2b45;">10.</div>
<div class="b" style="left:391.714px;top:554.7px;width:12px;height:12px;border:1px solid #e3e5e8;border-radius:50%"></div>
<div class="t" style="left:260.85699999999997px;top:589px;font-size:12.5px;font-weight:normal;color:#2f3a4f;">Quantity</div>
<div class="t" style="right:1195.086px;top:589px;font-size:12.5px;font-weight:normal;color:#2f3a4f;text-align:right;">1</div>
<div class="t" style="left:260.85699999999997px;top:606px;font-size:12.5px;font-weight:normal;color:#2f3a4f;">Rate</div>
<div class="t" style="right:1195.086px;top:606px;font-size:12.5px;font-weight:normal;color:#2f3a4f;text-align:right;">98.57 NOK</div>
<div class="t" style="left:260.85699999999997px;top:623px;font-size:12.5px;font-weight:normal;color:#2f3a4f;">Discount</div>
<div class="t" style="right:1195.086px;top:623px;font-size:12.5px;font-weight:normal;color:#2f3a4f;text-align:right;">0.00 %</div>
<div class="t" style="left:260.85699999999997px;top:640px;font-size:12.5px;font-weight:normal;color:#2f3a4f;">Net rate</div>
<div class="t" style="right:1195.086px;top:640px;font-size:12.5px;font-weight:normal;color:#2f3a4f;text-align:right;">98.57 NOK</div>
<div class="t" style="left:418.714px;top:553px;font-size:13px;font-weight:bold;color:#1f2b45;">11.</div>
<div class="b" style="left:549.571px;top:554.7px;width:12px;height:12px;border:1px solid #e3e5e8;border-radius:50%"></div>
<div class="t" style="left:418.714px;top:589px;font-size:12.5px;font-weight:normal;color:#2f3a4f;">Quantity</div>
<div class="t" style="right:1037.2289999999998px;top:589px;font-size:12.5px;font-weight:normal;color:#2f3a4f;text-align:right;">1</div>
<div class="t" style="left:418.714px;top:606px;font-size:12.5px;font-weight:normal;color:#2f3a4f;">Rate</div>
<div class="t" style="right:1037.2289999999998px;top:606px;font-size:12.5px;font-weight:normal;color:#2f3a4f;text-align:right;">98.57 NOK</div>
<div class="t" style="left:418.714px;top:623px;font-size:12.5px;font-weight:normal;color:#2f3a4f;">Discount</div>
<div class="t" style="right:1037.2289999999998px;top:623px;font-size:12.5px;font-weight:normal;color:#2f3a4f;text-align:right;">0.00 %</div>
<div class="t" style="left:418.714px;top:640px;font-size:12.5px;font-weight:normal;color:#2f3a4f;">Net rate</div>
<div class="t" style="right:1037.2289999999998px;top:640px;font-size:12.5px;font-weight:normal;color:#2f3a4f;text-align:right;">98.57 NOK</div>
<div class="t" style="left:576.571px;top:553px;font-size:13px;font-weight:bold;color:#1f2b45;">12.</div>
<div class="b" style="left:707.428px;top:554.7px;width:12px;height:12px;border:1px solid #e3e5e8;border-radius:50%"></div>
<div class="t" style="left:576.571px;top:589px;font-size:12.5px;font-weight:normal;color:#2f3a4f;">Quantity</div>
<div class="t" style="right:879.372px;top:589px;font-size:12.5px;font-weight:normal;color:#2f3a4f;text-align:right;">1</div>
<div class="t" style="left:576.571px;top:606px;font-size:12.5px;font-weight:normal;color:#2f3a4f;">Rate</div>
<div class="t" style="right:879.372px;top:606px;font-size:12.5px;font-weight:normal;color:#2f3a4f;text-align:right;">98.57 NOK</div>
<div class="t" style="left:576.571px;top:623px;font-size:12.5px;font-weight:normal;color:#2f3a4f;">Discount</div>
<div class="t" style="right:879.372px;top:623px;font-size:12.5px;font-weight:normal;color:#2f3a4f;text-align:right;">0.00 %</div>
<div class="t" style="left:576.571px;top:640px;font-size:12.5px;font-weight:normal;color:#2f3a4f;">Net rate</div>
<div class="t" style="right:879.372px;top:640px;font-size:12.5px;font-weight:normal;color:#2f3a4f;text-align:right;">98.57 NOK</div>
<div class="b" style="left:728px;top:546px;width:157px;height:111px;background:#f37b00"></div>
<div class="t" style="left:734.428px;top:553px;font-size:13px;font-weight:bold;color:#fff;">13.</div>
<div class="b" style="left:865.285px;top:554.7px;width:12px;height:12px;background:#f2f2f2;border-radius:50%"></div>
<div class="t" style="left:734.428px;top:589px;font-size:12.5px;font-weight:normal;color:#fff;">Quantity</div>
<div class="t" style="right:721.515px;top:589px;font-size:12.5px;font-weight:normal;color:#fff;text-align:right;">1</div>
<div class="t" style="left:734.428px;top:606px;font-size:12.5px;font-weight:normal;color:#fff;">Rate</div>
<div class="t" style="right:721.515px;top:606px;font-size:12.5px;font-weight:normal;color:#fff;text-align:right;">98.57 NOK</div>
<div class="t" style="left:734.428px;top:623px;font-size:12.5px;font-weight:normal;color:#fff;">Discount</div>
<div class="t" style="right:721.515px;top:623px;font-size:12.5px;font-weight:normal;color:#fff;text-align:right;">0.00 %</div>
<div class="t" style="left:734.428px;top:640px;font-size:12.5px;font-weight:normal;color:#fff;">Net rate</div>
<div class="t" style="right:721.515px;top:640px;font-size:12.5px;font-weight:normal;color:#fff;text-align:right;">98.57 NOK</div>
<div class="t" style="left:892.285px;top:553px;font-size:13px;font-weight:bold;color:#1f2b45;">14.</div>
<div class="b" style="left:1023.142px;top:554.7px;width:12px;height:12px;border:1px solid #e3e5e8;border-radius:50%"></div>
<div class="t" style="left:892.285px;top:589px;font-size:12.5px;font-weight:normal;color:#2f3a4f;">Quantity</div>
<div class="t" style="right:563.6579999999999px;top:589px;font-size:12.5px;font-weight:normal;color:#2f3a4f;text-align:right;">1</div>
<div class="t" style="left:892.285px;top:606px;font-size:12.5px;font-weight:normal;color:#2f3a4f;">Rate</div>
<div class="t" style="right:563.6579999999999px;top:606px;font-size:12.5px;font-weight:normal;color:#2f3a4f;text-align:right;">98.57 NOK</div>
<div class="t" style="left:892.285px;top:623px;font-size:12.5px;font-weight:normal;color:#2f3a4f;">Discount</div>
<div class="t" style="right:563.6579999999999px;top:623px;font-size:12.5px;font-weight:normal;color:#2f3a4f;text-align:right;">0.00 %</div>
<div class="t" style="left:892.285px;top:640px;font-size:12.5px;font-weight:normal;color:#2f3a4f;">Net rate</div>
<div class="t" style="right:563.6579999999999px;top:640px;font-size:12.5px;font-weight:normal;color:#2f3a4f;text-align:right;">98.57 NOK</div>
<div class="t" style="left:1050.142px;top:553px;font-size:13px;font-weight:bold;color:#1f2b45;">15.</div>
<div class="b" style="left:1181px;top:554.7px;width:12px;height:12px;border:1px solid #e3e5e8;border-radius:50%"></div>
<div class="t" style="left:1050.142px;top:589px;font-size:12.5px;font-weight:normal;color:#2f3a4f;">Quantity</div>
<div class="t" style="right:405.79999999999995px;top:589px;font-size:12.5px;font-weight:normal;color:#2f3a4f;text-align:right;">1</div>
<div class="t" style="left:1050.142px;top:606px;font-size:12.5px;font-weight:normal;color:#2f3a4f;">Rate</div>
<div class="t" style="right:405.79999999999995px;top:606px;font-size:12.5px;font-weight:normal;color:#2f3a4f;text-align:right;">98.57 NOK</div>
<div class="t" style="left:1050.142px;top:623px;font-size:12.5px;font-weight:normal;color:#2f3a4f;">Discount</div>
<div class="t" style="right:405.79999999999995px;top:623px;font-size:12.5px;font-weight:normal;color:#2f3a4f;text-align:right;">0.00 %</div>
<div class="t" style="left:1050.142px;top:640px;font-size:12.5px;font-weight:normal;color:#2f3a4f;">Net rate</div>
<div class="t" style="right:405.79999999999995px;top:640px;font-size:12.5px;font-weight:normal;color:#2f3a4f;text-align:right;">98.57 NOK</div>
<div class="b" style="left:96px;top:568px;width:1105px;height:18px;background:#acd3f4"></div>
<div class="t" style="left:348.5px;width:600px;top:572px;font-size:12.5px;font-weight:normal;color:#1f2b45;text-align:center;">2024.09.01 - 2024.09.30</div>
<div class="t" style="left:103.0px;top:665px;font-size:13px;font-weight:bold;color:#1f2b45;">16.</div>
<div class="b" style="left:233.857px;top:666.3px;width:12px;height:12px;border:1px solid #e3e5e8;border-radius:50%"></div>
<div class="t" style="left:103.0px;top:700px;font-size:12.5px;font-weight:normal;color:#2f3a4f;">Quantity</div>
<div class="t" style="right:1352.943px;top:700px;font-size:12.5px;font-weight:normal;color:#2f3a4f;text-align:right;">1</div>
<div class="t" style="left:103.0px;top:717px;font-size:12.5px;font-weight:normal;color:#2f3a4f;">Rate</div>
<div class="t" style="right:1352.943px;top:717px;font-size:12.5px;font-weight:normal;color:#2f3a4f;text-align:right;">98.57 NOK</div>
<div class="t" style="left:103.0px;top:734px;font-size:12.5px;font-weight:normal;color:#2f3a4f;">Discount</div>
<div class="t" style="right:1352.943px;top:734px;font-size:12.5px;font-weight:normal;color:#2f3a4f;text-align:right;">0.00 %</div>
<div class="t" style="left:103.0px;top:751px;font-size:12.5px;font-weight:normal;color:#2f3a4f;">Net rate</div>
<div class="t" style="right:1352.943px;top:751px;font-size:12.5px;font-weight:normal;color:#2f3a4f;text-align:right;">98.57 NOK</div>
<div class="t" style="left:260.85699999999997px;top:665px;font-size:13px;font-weight:bold;color:#1f2b45;">17.</div>
<div class="b" style="left:391.714px;top:666.3px;width:12px;height:12px;border:1px solid #e3e5e8;border-radius:50%"></div>
<div class="t" style="left:260.85699999999997px;top:700px;font-size:12.5px;font-weight:normal;color:#2f3a4f;">Quantity</div>
<div class="t" style="right:1195.086px;top:700px;font-size:12.5px;font-weight:normal;color:#2f3a4f;text-align:right;">1</div>
<div class="t" style="left:260.85699999999997px;top:717px;font-size:12.5px;font-weight:normal;color:#2f3a4f;">Rate</div>
<div class="t" style="right:1195.086px;top:717px;font-size:12.5px;font-weight:normal;color:#2f3a4f;text-align:right;">98.57 NOK</div>
<div class="t" style="left:260.85699999999997px;top:734px;font-size:12.5px;font-weight:normal;color:#2f3a4f;">Discount</div>
<div class="t" style="right:1195.086px;top:734px;font-size:12.5px;font-weight:normal;color:#2f3a4f;text-align:right;">0.00 %</div>
<div class="t" style="left:260.85699999999997px;top:751px;font-size:12.5px;font-weight:normal;color:#2f3a4f;">Net rate</div>
<div class="t" style="right:1195.086px;top:751px;font-size:12.5px;font-weight:normal;color:#2f3a4f;text-align:right;">98.57 NOK</div>
<div class="t" style="left:418.714px;top:665px;font-size:13px;font-weight:bold;color:#1f2b45;">18.</div>
<div class="b" style="left:549.571px;top:666.3px;width:12px;height:12px;border:1px solid #e3e5e8;border-radius:50%"></div>
<div class="t" style="left:418.714px;top:700px;font-size:12.5px;font-weight:normal;color:#2f3a4f;">Quantity</div>
<div class="t" style="right:1037.2289999999998px;top:700px;font-size:12.5px;font-weight:normal;color:#2f3a4f;text-align:right;">1</div>
<div class="t" style="left:418.714px;top:717px;font-size:12.5px;font-weight:normal;color:#2f3a4f;">Rate</div>
<div class="t" style="right:1037.2289999999998px;top:717px;font-size:12.5px;font-weight:normal;color:#2f3a4f;text-align:right;">98.57 NOK</div>
<div class="t" style="left:418.714px;top:734px;font-size:12.5px;font-weight:normal;color:#2f3a4f;">Discount</div>
<div class="t" style="right:1037.2289999999998px;top:734px;font-size:12.5px;font-weight:normal;color:#2f3a4f;text-align:right;">0.00 %</div>
<div class="t" style="left:418.714px;top:751px;font-size:12.5px;font-weight:normal;color:#2f3a4f;">Net rate</div>
<div class="t" style="right:1037.2289999999998px;top:751px;font-size:12.5px;font-weight:normal;color:#2f3a4f;text-align:right;">98.57 NOK</div>
<div class="t" style="left:576.571px;top:665px;font-size:13px;font-weight:bold;color:#1f2b45;">19.</div>
<div class="b" style="left:707.428px;top:666.3px;width:12px;height:12px;border:1px solid #e3e5e8;border-radius:50%"></div>
<div class="t" style="left:576.571px;top:700px;font-size:12.5px;font-weight:normal;color:#2f3a4f;">Quantity</div>
<div class="t" style="right:879.372px;top:700px;font-size:12.5px;font-weight:normal;color:#2f3a4f;text-align:right;">1</div>
<div class="t" style="left:576.571px;top:717px;font-size:12.5px;font-weight:normal;color:#2f3a4f;">Rate</div>
<div class="t" style="right:879.372px;top:717px;font-size:12.5px;font-weight:normal;color:#2f3a4f;text-align:right;">98.57 NOK</div>
<div class="t" style="left:576.571px;top:734px;font-size:12.5px;font-weight:normal;color:#2f3a4f;">Discount</div>
<div class="t" style="right:879.372px;top:734px;font-size:12.5px;font-weight:normal;color:#2f3a4f;text-align:right;">0.00 %</div>
<div class="t" style="left:576.571px;top:751px;font-size:12.5px;font-weight:normal;color:#2f3a4f;">Net rate</div>
<div class="t" style="right:879.372px;top:751px;font-size:12.5px;font-weight:normal;color:#2f3a4f;text-align:right;">98.57 NOK</div>
<div class="t" style="left:734.428px;top:665px;font-size:13px;font-weight:bold;color:#1f2b45;">20.</div>
<div class="b" style="left:865.285px;top:666.3px;width:12px;height:12px;border:1px solid #e3e5e8;border-radius:50%"></div>
<div class="t" style="left:734.428px;top:700px;font-size:12.5px;font-weight:normal;color:#2f3a4f;">Quantity</div>
<div class="t" style="right:721.515px;top:700px;font-size:12.5px;font-weight:normal;color:#2f3a4f;text-align:right;">1</div>
<div class="t" style="left:734.428px;top:717px;font-size:12.5px;font-weight:normal;color:#2f3a4f;">Rate</div>
<div class="t" style="right:721.515px;top:717px;font-size:12.5px;font-weight:normal;color:#2f3a4f;text-align:right;">98.57 NOK</div>
<div class="t" style="left:734.428px;top:734px;font-size:12.5px;font-weight:normal;color:#2f3a4f;">Discount</div>
<div class="t" style="right:721.515px;top:734px;font-size:12.5px;font-weight:normal;color:#2f3a4f;text-align:right;">0.00 %</div>
<div class="t" style="left:734.428px;top:751px;font-size:12.5px;font-weight:normal;color:#2f3a4f;">Net rate</div>
<div class="t" style="right:721.515px;top:751px;font-size:12.5px;font-weight:normal;color:#2f3a4f;text-align:right;">98.57 NOK</div>
<div class="t" style="left:892.285px;top:665px;font-size:13px;font-weight:bold;color:#1f2b45;">21.</div>
<div class="b" style="left:1023.142px;top:666.3px;width:12px;height:12px;border:1px solid #e3e5e8;border-radius:50%"></div>
<div class="t" style="left:892.285px;top:700px;font-size:12.5px;font-weight:normal;color:#2f3a4f;">Quantity</div>
<div class="t" style="right:563.6579999999999px;top:700px;font-size:12.5px;font-weight:normal;color:#2f3a4f;text-align:right;">1</div>
<div class="t" style="left:892.285px;top:717px;font-size:12.5px;font-weight:normal;color:#2f3a4f;">Rate</div>
<div class="t" style="right:563.6579999999999px;top:717px;font-size:12.5px;font-weight:normal;color:#2f3a4f;text-align:right;">98.57 NOK</div>
<div class="t" style="left:892.285px;top:734px;font-size:12.5px;font-weight:normal;color:#2f3a4f;">Discount</div>
<div class="t" style="right:563.6579999999999px;top:734px;font-size:12.5px;font-weight:normal;color:#2f3a4f;text-align:right;">0.00 %</div>
<div class="t" style="left:892.285px;top:751px;font-size:12.5px;font-weight:normal;color:#2f3a4f;">Net rate</div>
<div class="t" style="right:563.6579999999999px;top:751px;font-size:12.5px;font-weight:normal;color:#2f3a4f;text-align:right;">98.57 NOK</div>
<div class="t" style="left:1050.142px;top:665px;font-size:13px;font-weight:bold;color:#1f2b45;">22.</div>
<div class="b" style="left:1181px;top:666.3px;width:12px;height:12px;border:1px solid #e3e5e8;border-radius:50%"></div>
<div class="t" style="left:1050.142px;top:700px;font-size:12.5px;font-weight:normal;color:#2f3a4f;">Quantity</div>
<div class="t" style="right:405.79999999999995px;top:700px;font-size:12.5px;font-weight:normal;color:#2f3a4f;text-align:right;">1</div>
<div class="t" style="left:1050.142px;top:717px;font-size:12.5px;font-weight:normal;color:#2f3a4f;">Rate</div>
<div class="t" style="right:405.79999999999995px;top:717px;font-size:12.5px;font-weight:normal;color:#2f3a4f;text-align:right;">98.57 NOK</div>
<div class="t" style="left:1050.142px;top:734px;font-size:12.5px;font-weight:normal;color:#2f3a4f;">Discount</div>
<div class="t" style="right:405.79999999999995px;top:734px;font-size:12.5px;font-weight:normal;color:#2f3a4f;text-align:right;">0.00 %</div>
<div class="t" style="left:1050.142px;top:751px;font-size:12.5px;font-weight:normal;color:#2f3a4f;">Net rate</div>
<div class="t" style="right:405.79999999999995px;top:751px;font-size:12.5px;font-weight:normal;color:#2f3a4f;text-align:right;">98.57 NOK</div>
<div class="b" style="left:96px;top:680px;width:1105px;height:18px;background:#acd3f4"></div>
<div class="t" style="left:348.5px;width:600px;top:683px;font-size:12.5px;font-weight:normal;color:#1f2b45;text-align:center;">2024.09.01 - 2024.09.30</div>
<div class="t" style="left:103.0px;top:776px;font-size:13px;font-weight:bold;color:#1f2b45;">23.</div>
<div class="b" style="left:233.857px;top:777.9000000000001px;width:12px;height:12px;border:1px solid #e3e5e8;border-radius:50%"></div>
<div class="t" style="left:103.0px;top:812px;font-size:12.5px;font-weight:normal;color:#2f3a4f;">Quantity</div>
<div class="t" style="right:1352.943px;top:812px;font-size:12.5px;font-weight:normal;color:#2f3a4f;text-align:right;">1</div>
<div class="t" style="left:103.0px;top:829px;font-size:12.5px;font-weight:normal;color:#2f3a4f;">Rate</div>
<div class="t" style="right:1352.943px;top:829px;font-size:12.5px;font-weight:normal;color:#2f3a4f;text-align:right;">98.57 NOK</div>
<div class="t" style="left:103.0px;top:846px;font-size:12.5px;font-weight:normal;color:#2f3a4f;">Discount</div>
<div class="t" style="right:1352.943px;top:846px;font-size:12.5px;font-weight:normal;color:#2f3a4f;text-align:right;">0.00 %</div>
<div class="t" style="left:103.0px;top:863px;font-size:12.5px;font-weight:normal;color:#2f3a4f;">Net rate</div>
<div class="t" style="right:1352.943px;top:863px;font-size:12.5px;font-weight:normal;color:#2f3a4f;text-align:right;">98.57 NOK</div>
<div class="t" style="left:260.85699999999997px;top:776px;font-size:13px;font-weight:bold;color:#1f2b45;">24.</div>
<div class="b" style="left:391.714px;top:777.9000000000001px;width:12px;height:12px;border:1px solid #e3e5e8;border-radius:50%"></div>
<div class="t" style="left:260.85699999999997px;top:812px;font-size:12.5px;font-weight:normal;color:#2f3a4f;">Quantity</div>
<div class="t" style="right:1195.086px;top:812px;font-size:12.5px;font-weight:normal;color:#2f3a4f;text-align:right;">1</div>
<div class="t" style="left:260.85699999999997px;top:829px;font-size:12.5px;font-weight:normal;color:#2f3a4f;">Rate</div>
<div class="t" style="right:1195.086px;top:829px;font-size:12.5px;font-weight:normal;color:#2f3a4f;text-align:right;">98.57 NOK</div>
<div class="t" style="left:260.85699999999997px;top:846px;font-size:12.5px;font-weight:normal;color:#2f3a4f;">Discount</div>
<div class="t" style="right:1195.086px;top:846px;font-size:12.5px;font-weight:normal;color:#2f3a4f;text-align:right;">0.00 %</div>
<div class="t" style="left:260.85699999999997px;top:863px;font-size:12.5px;font-weight:normal;color:#2f3a4f;">Net rate</div>
<div class="t" style="right:1195.086px;top:863px;font-size:12.5px;font-weight:normal;color:#2f3a4f;text-align:right;">98.57 NOK</div>
<div class="t" style="left:418.714px;top:776px;font-size:13px;font-weight:bold;color:#1f2b45;">25.</div>
<div class="b" style="left:549.571px;top:777.9000000000001px;width:12px;height:12px;border:1px solid #e3e5e8;border-radius:50%"></div>
<div class="t" style="left:418.714px;top:812px;font-size:12.5px;font-weight:normal;color:#2f3a4f;">Quantity</div>
<div class="t" style="right:1037.2289999999998px;top:812px;font-size:12.5px;font-weight:normal;color:#2f3a4f;text-align:right;">1</div>
<div class="t" style="left:418.714px;top:829px;font-size:12.5px;font-weight:normal;color:#2f3a4f;">Rate</div>
<div class="t" style="right:1037.2289999999998px;top:829px;font-size:12.5px;font-weight:normal;color:#2f3a4f;text-align:right;">98.57 NOK</div>
<div class="t" style="left:418.714px;top:846px;font-size:12.5px;font-weight:normal;color:#2f3a4f;">Discount</div>
<div class="t" style="right:1037.2289999999998px;top:846px;font-size:12.5px;font-weight:normal;color:#2f3a4f;text-align:right;">0.00 %</div>
<div class="t" style="left:418.714px;top:863px;font-size:12.5px;font-weight:normal;color:#2f3a4f;">Net rate</div>
<div class="t" style="right:1037.2289999999998px;top:863px;font-size:12.5px;font-weight:normal;color:#2f3a4f;text-align:right;">98.57 NOK</div>
<div class="t" style="left:576.571px;top:776px;font-size:13px;font-weight:bold;color:#1f2b45;">26.</div>
<div class="b" style="left:707.428px;top:777.9000000000001px;width:12px;height:12px;border:1px solid #e3e5e8;border-radius:50%"></div>
<div class="t" style="left:576.571px;top:812px;font-size:12.5px;font-weight:normal;color:#2f3a4f;">Quantity</div>
<div class="t" style="right:879.372px;top:812px;font-size:12.5px;font-weight:normal;color:#2f3a4f;text-align:right;">1</div>
<div class="t" style="left:576.571px;top:829px;font-size:12.5px;font-weight:normal;color:#2f3a4f;">Rate</div>
<div class="t" style="right:879.372px;top:829px;font-size:12.5px;font-weight:normal;color:#2f3a4f;text-align:right;">98.57 NOK</div>
<div class="t" style="left:576.571px;top:846px;font-size:12.5px;font-weight:normal;color:#2f3a4f;">Discount</div>
<div class="t" style="right:879.372px;top:846px;font-size:12.5px;font-weight:normal;color:#2f3a4f;text-align:right;">0.00 %</div>
<div class="t" style="left:576.571px;top:863px;font-size:12.5px;font-weight:normal;color:#2f3a4f;">Net rate</div>
<div class="t" style="right:879.372px;top:863px;font-size:12.5px;font-weight:normal;color:#2f3a4f;text-align:right;">98.57 NOK</div>
<div class="t" style="left:734.428px;top:776px;font-size:13px;font-weight:bold;color:#1f2b45;">27.</div>
<div class="b" style="left:865.285px;top:777.9000000000001px;width:12px;height:12px;border:1px solid #e3e5e8;border-radius:50%"></div>
<div class="t" style="left:734.428px;top:812px;font-size:12.5px;font-weight:normal;color:#2f3a4f;">Quantity</div>
<div class="t" style="right:721.515px;top:812px;font-size:12.5px;font-weight:normal;color:#2f3a4f;text-align:right;">1</div>
<div class="t" style="left:734.428px;top:829px;font-size:12.5px;font-weight:normal;color:#2f3a4f;">Rate</div>
<div class="t" style="right:721.515px;top:829px;font-size:12.5px;font-weight:normal;color:#2f3a4f;text-align:right;">98.57 NOK</div>
<div class="t" style="left:734.428px;top:846px;font-size:12.5px;font-weight:normal;color:#2f3a4f;">Discount</div>
<div class="t" style="right:721.515px;top:846px;font-size:12.5px;font-weight:normal;color:#2f3a4f;text-align:right;">0.00 %</div>
<div class="t" style="left:734.428px;top:863px;font-size:12.5px;font-weight:normal;color:#2f3a4f;">Net rate</div>
<div class="t" style="right:721.515px;top:863px;font-size:12.5px;font-weight:normal;color:#2f3a4f;text-align:right;">98.57 NOK</div>
<div class="t" style="left:892.285px;top:776px;font-size:13px;font-weight:bold;color:#1f2b45;">28.</div>
<div class="b" style="left:1023.142px;top:777.9000000000001px;width:12px;height:12px;border:1px solid #e3e5e8;border-radius:50%"></div>
<div class="t" style="left:892.285px;top:812px;font-size:12.5px;font-weight:normal;color:#2f3a4f;">Quantity</div>
<div class="t" style="right:563.6579999999999px;top:812px;font-size:12.5px;font-weight:normal;color:#2f3a4f;text-align:right;">1</div>
<div class="t" style="left:892.285px;top:829px;font-size:12.5px;font-weight:normal;color:#2f3a4f;">Rate</div>
<div class="t" style="right:563.6579999999999px;top:829px;font-size:12.5px;font-weight:normal;color:#2f3a4f;text-align:right;">98.57 NOK</div>
<div class="t" style="left:892.285px;top:846px;font-size:12.5px;font-weight:normal;color:#2f3a4f;">Discount</div>
<div class="t" style="right:563.6579999999999px;top:846px;font-size:12.5px;font-weight:normal;color:#2f3a4f;text-align:right;">0.00 %</div>
<div class="t" style="left:892.285px;top:863px;font-size:12.5px;font-weight:normal;color:#2f3a4f;">Net rate</div>
<div class="t" style="right:563.6579999999999px;top:863px;font-size:12.5px;font-weight:normal;color:#2f3a4f;text-align:right;">98.57 NOK</div>
<div class="t" style="left:1050.142px;top:776px;font-size:13px;font-weight:bold;color:#1f2b45;">29.</div>
<div class="b" style="left:1181px;top:777.9000000000001px;width:12px;height:12px;border:1px solid #e3e5e8;border-radius:50%"></div>
<div class="t" style="left:1050.142px;top:812px;font-size:12.5px;font-weight:normal;color:#2f3a4f;">Quantity</div>
<div class="t" style="right:405.79999999999995px;top:812px;font-size:12.5px;font-weight:normal;color:#2f3a4f;text-align:right;">1</div>
<div class="t" style="left:1050.142px;top:829px;font-size:12.5px;font-weight:normal;color:#2f3a4f;">Rate</div>
<div class="t" style="right:405.79999999999995px;top:829px;font-size:12.5px;font-weight:normal;color:#2f3a4f;text-align:right;">98.57 NOK</div>
<div class="t" style="left:1050.142px;top:846px;font-size:12.5px;font-weight:normal;color:#2f3a4f;">Discount</div>
<div class="t" style="right:405.79999999999995px;top:846px;font-size:12.5px;font-weight:normal;color:#2f3a4f;text-align:right;">0.00 %</div>
<div class="t" style="left:1050.142px;top:863px;font-size:12.5px;font-weight:normal;color:#2f3a4f;">Net rate</div>
<div class="t" style="right:405.79999999999995px;top:863px;font-size:12.5px;font-weight:normal;color:#2f3a4f;text-align:right;">98.57 NOK</div>
<div class="b" style="left:96px;top:792px;width:1105px;height:18px;background:#acd3f4"></div>
<div class="t" style="left:348.5px;width:600px;top:795px;font-size:12.5px;font-weight:normal;color:#1f2b45;text-align:center;">2024.09.01 - 2024.09.30</div>
<div class="t" style="left:103.0px;top:888px;font-size:13px;font-weight:bold;color:#1f2b45;">30.</div>
<div class="b" style="left:233.857px;top:889.5px;width:12px;height:12px;border:1px solid #e3e5e8;border-radius:50%"></div>
<div class="b" style="left:96px;top:903px;width:153px;height:5px;background:#acd3f4"></div>
<svg style="left:249px;top:903px;" width="5" height="5" viewBox="0 0 5 5"><path d="M0 0H1L5 4V5H0Z" fill="#7391ae"/></svg>
<div class="b" style="left:87px;top:220px;width:1118px;height:690px;border:3px solid #fc3b40"></div>
<div class="b" style="left:1205px;top:223px;width:375px;height:687px;background:#fff"></div>
<div class="b" style="left:1205px;top:253px;width:371px;height:2px;background:#f37b00"></div>
<div class="t" style="left:1212px;top:268px;font-size:13.5px;font-weight:bold;color:#1f2b45;">Selected day summary</div>
<div class="b" style="left:1212px;top:285px;width:362px;height:2px;background:#f37b00"></div>
<div class="b" style="left:1513px;top:261px;width:59px;height:21px;background:#c9d0da;border-radius:11px"></div>
<div class="t" style="left:1522px;top:266px;font-size:12.5px;font-weight:normal;color:#27324a;">Draft</div>
<div class="b" style="left:1553px;top:263px;width:17px;height:17px;background:#fff;border-radius:50%"></div>
<div class="t" style="left:1261.5px;width:600px;top:267px;font-size:11.5px;font-weight:normal;color:#555;text-align:center;">1</div>
<div class="t" style="left:1220.5px;top:306px;font-size:12.5px;font-weight:normal;color:#3a4254;">Date</div>
<div class="t" style="right:34.5px;top:306px;font-size:12.5px;font-weight:normal;color:#3a4254;text-align:right;">2024.09.13</div>
<div class="t" style="left:1220.5px;top:326px;font-size:12.5px;font-weight:normal;color:#3a4254;">Rate</div>
<div class="t" style="right:34.5px;top:326px;font-size:12.5px;font-weight:normal;color:#3a4254;text-align:right;">98.57 NOK</div>
<div class="t" style="left:1220.5px;top:346px;font-size:12.5px;font-weight:normal;color:#3a4254;">Discount percent</div>
<div class="t" style="right:34.5px;top:346px;font-size:12.5px;font-weight:normal;color:#3a4254;text-align:right;">0.00 %</div>
<div class="t" style="left:1220.5px;top:366px;font-size:12.5px;font-weight:normal;color:#3a4254;">Discount amount</div>
<div class="t" style="right:34.5px;top:366px;font-size:12.5px;font-weight:normal;color:#3a4254;text-align:right;">0.00 NOK</div>
<div class="t" style="left:1220.5px;top:386px;font-size:12.5px;font-weight:normal;color:#3a4254;">Net rate</div>
<div class="t" style="right:34.5px;top:386px;font-size:12.5px;font-weight:normal;color:#3a4254;text-align:right;">98.57 NOK</div>
<div class="t" style="left:1220.5px;top:406px;font-size:12.5px;font-weight:normal;color:#3a4254;">Invoiced amount</div>
<div class="t" style="right:34.5px;top:406px;font-size:12.5px;font-weight:normal;color:#3a4254;text-align:right;">0.00 NOK</div>
<div class="t" style="left:1220.5px;top:426px;font-size:12.5px;font-weight:normal;color:#3a4254;">Estimated revenue</div>
<div class="t" style="right:34.5px;top:426px;font-size:12.5px;font-weight:normal;color:#3a4254;text-align:right;">12025.71 NOK</div>
<div class="t" style="left:1220.5px;top:446px;font-size:12.5px;font-weight:normal;color:#3a4254;">Forecasted revenue</div>
<div class="t" style="right:34.5px;top:446px;font-size:12.5px;font-weight:normal;color:#3a4254;text-align:right;">10744.29 NOK</div>
<div class="t" style="left:1220.5px;top:466px;font-size:12.5px;font-weight:normal;color:#3a4254;">Earned revenue</div>
<div class="t" style="right:34.5px;top:466px;font-size:12.5px;font-weight:normal;color:#3a4254;text-align:right;">1281.43 NOK</div>
<div class="t" style="left:1220.5px;top:486px;font-size:12.5px;font-weight:normal;color:#3a4254;">Accrued revenue</div>
<div class="t" style="right:34.5px;top:486px;font-size:12.5px;font-weight:normal;color:#3a4254;text-align:right;">1281.43 NOK</div>
<div class="t" style="left:1220.5px;top:506px;font-size:12.5px;font-weight:normal;color:#3a4254;">Change reason</div>
<div class="b" style="left:1208px;top:220px;width:371px;height:315px;border:3px solid #fc3b40"></div>
<div class="t" style="left:1213px;top:552px;font-size:13.5px;font-weight:bold;color:#1f2b45;">Invoice period summary</div>
<div class="b" style="left:1212px;top:569px;width:362px;height:2px;background:#f37b00"></div>
<div class="b" style="left:1500px;top:545px;width:72px;height:21px;background:#c9d0da;border-radius:11px"></div>
<div class="t" style="left:1508px;top:550px;font-size:12.5px;font-weight:normal;color:#27324a;">Current</div>
<div class="b" style="left:1553px;top:547px;width:17px;height:17px;background:#4a9490;border-radius:50%"></div>
<div class="t" style="left:1261.5px;width:600px;top:551px;font-size:11.5px;font-weight:bold;color:#fff;text-align:center;">4</div>
<div class="t" style="left:1217px;top:580px;font-size:12px;font-weight:normal;color:#6b7280;">Invoice period</div>
<div class="t" style="left:1217px;top:600px;font-size:13px;font-weight:normal;color:#1f2b45;">2024.09.01 - 2024.09.30</div>
<div class="b" style="left:1217px;top:616px;width:345px;height:1px;border-top:1px dashed #9aa7b8"></div>
<svg style="left:1545px;top:602px;" width="7" height="6" viewBox="0 0 7 6"><path d="M0 0H7L3.5 6Z" fill="#1f2b45"/></svg>
<div class="t" style="left:1216.5px;top:637px;font-size:12.5px;font-weight:normal;color:#3a4254;">Total no of days</div>
<div class="t" style="right:30.5px;top:637px;font-size:12.5px;font-weight:normal;color:#3a4254;text-align:right;">70</div>
<div class="t" style="left:1216.5px;top:656px;font-size:12.5px;font-weight:normal;color:#3a4254;">No of on-rent/off-rent days</div>
<div class="t" style="right:30.5px;top:656px;font-size:12.5px;font-weight:normal;color:#3a4254;text-align:right;">70 / 0</div>
<div class="t" style="left:1216.5px;top:676px;font-size:12.5px;font-weight:normal;color:#3a4254;">Average rate per day</div>
<div class="t" style="right:30.5px;top:676px;font-size:12.5px;font-weight:normal;color:#3a4254;text-align:right;">NOK</div>
<div class="t" style="left:1216.5px;top:708px;font-size:12.5px;font-weight:bold;color:#3a4254;">Invoice parameters</div>
<div class="t" style="left:1220.3px;top:732px;font-size:12.5px;font-weight:normal;color:#3a4254;">Invoice schedule</div>
<div class="t" style="right:34px;top:732px;font-size:12.5px;font-weight:normal;color:#3a4254;text-align:right;">Monthly</div>
<div class="t" style="left:1220.3px;top:752px;font-size:12.5px;font-weight:normal;color:#3a4254;">Invoice date</div>
<div class="t" style="right:34px;top:752px;font-size:12.5px;font-weight:normal;color:#3a4254;text-align:right;">2024.10.01</div>
<div class="t" style="left:1216.5px;top:779px;font-size:12.5px;font-weight:bold;color:#3a4254;">Totals</div>
<div class="t" style="left:1220.3px;top:802px;font-size:12.5px;font-weight:normal;color:#3a4254;">Total amount</div>
<div class="t" style="right:34px;top:802px;font-size:12.5px;font-weight:normal;color:#3a4254;text-align:right;">3,530.81 NOK</div>
<div class="t" style="left:1220.3px;top:822px;font-size:12.5px;font-weight:normal;color:#3a4254;">Total discount</div>
<div class="t" style="right:34px;top:822px;font-size:12.5px;font-weight:normal;color:#3a4254;text-align:right;">97.50 NOK</div>
<div class="t" style="left:1220.3px;top:843px;font-size:12.5px;font-weight:normal;color:#3a4254;">Total net amount</div>
<div class="t" style="right:34px;top:843px;font-size:12.5px;font-weight:normal;color:#3a4254;text-align:right;">3,433.31 NOK</div>
<div class="b" style="left:1208px;top:540px;width:372px;height:335px;border:3px solid #fc3b40"></div>
<div class="b" style="left:1202px;top:223px;width:3px;height:687px;background:#fc3b40"></div>
</body></html>
